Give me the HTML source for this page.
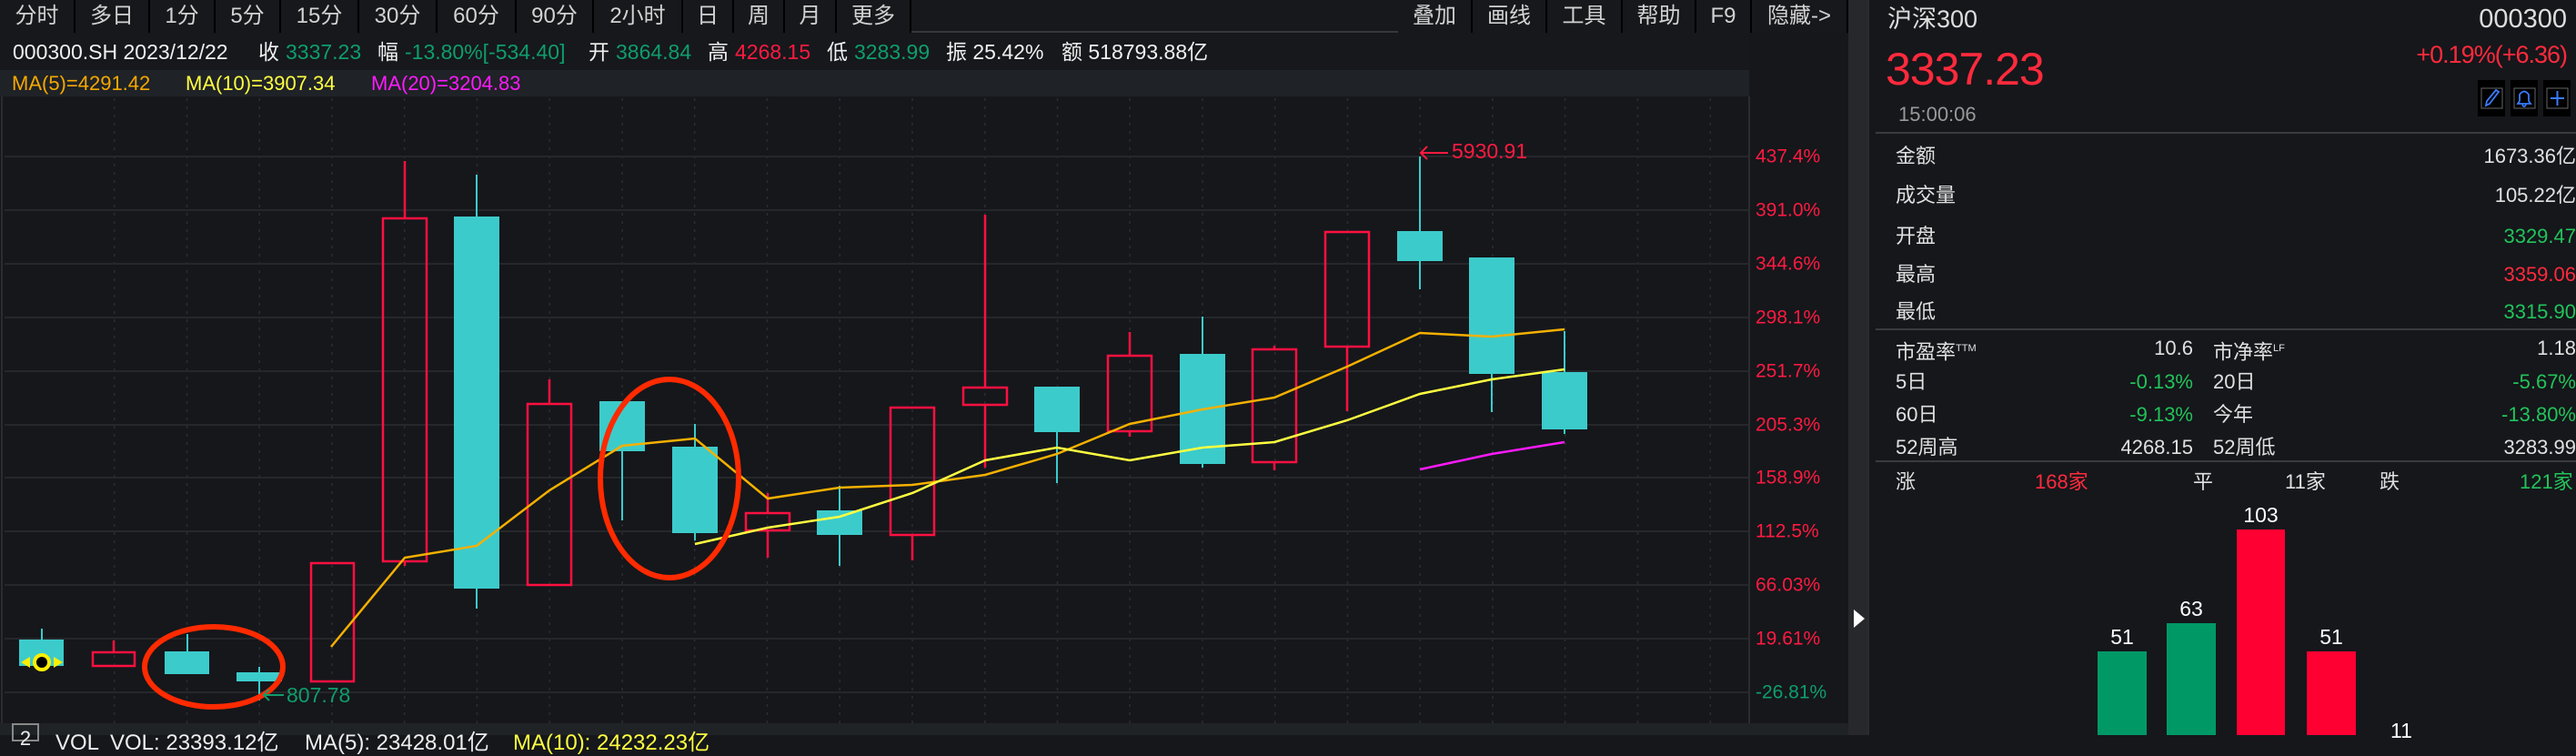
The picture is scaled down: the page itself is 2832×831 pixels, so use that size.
<!DOCTYPE html>
<html><head><meta charset="utf-8"><style>
*{margin:0;padding:0;box-sizing:border-box}
body{width:2832px;height:808px;background:#15171b;overflow:hidden;position:relative;font-family:"Liberation Sans","Noto Sans CJK SC",sans-serif;color:#e0e0e0}
.a{position:absolute;white-space:nowrap}
.tb{position:absolute;top:0;height:36px;background:#17181c;border-right:2px solid #000;color:#d2d2d2;font-size:24px;line-height:36px;text-align:center}
.r{color:#ff1a40}.g{color:#0f9d6b}.w{color:#f0f0f0}
.rp{font-size:22px;line-height:26px}
.gr{color:#22c35a}.rr{color:#ff2a3c}
</style></head><body>
<div class="a" style="left:0;top:0;width:2032px;height:36px;background:#17181c;border-bottom:2px solid #35373b"></div>
<div class="tb" style="left:0;width:83px">分时</div>
<div class="tb" style="left:83px;width:82px">多日</div>
<div class="tb" style="left:165px;width:72px">1分</div>
<div class="tb" style="left:237px;width:72px">5分</div>
<div class="tb" style="left:309px;width:86px">15分</div>
<div class="tb" style="left:395px;width:86px">30分</div>
<div class="tb" style="left:481px;width:87px">60分</div>
<div class="tb" style="left:568px;width:85px">90分</div>
<div class="tb" style="left:653px;width:98px">2小时</div>
<div class="tb" style="left:751px;width:56px">日</div>
<div class="tb" style="left:807px;width:56px">周</div>
<div class="tb" style="left:863px;width:57px">月</div>
<div class="tb" style="left:920px;width:82px">更多</div>
<div class="tb" style="left:1537px;width:82px">叠加</div>
<div class="tb" style="left:1619px;width:82px">画线</div>
<div class="tb" style="left:1701px;width:83px">工具</div>
<div class="tb" style="left:1784px;width:81px">帮助</div>
<div class="tb" style="left:1865px;width:61px">F9</div>
<div class="tb" style="left:1926px;width:106px">隐藏-&gt;</div>
<div class="a" style="left:0;top:37px;width:1923px;height:40px;background:#16181c"></div>
<div class="a" style="left:0;top:77px;width:1923px;height:29px;background:#1f2226"></div>
<div style="font-size:23px;line-height:40px">
<span class="a w" style="left:14px;top:37px">000300.SH 2023/12/22</span>
<span class="a w" style="left:284px;top:37px">收</span><span class="a g" style="left:314px;top:37px">3337.23</span>
<span class="a w" style="left:415px;top:37px">幅</span><span class="a g" style="left:445px;top:37px">-13.80%[-534.40]</span>
<span class="a w" style="left:647px;top:37px">开</span><span class="a g" style="left:677px;top:37px">3864.84</span>
<span class="a w" style="left:778px;top:37px">高</span><span class="a r" style="left:808px;top:37px">4268.15</span>
<span class="a w" style="left:909px;top:37px">低</span><span class="a g" style="left:939px;top:37px">3283.99</span>
<span class="a w" style="left:1040px;top:37px">振 25.42%</span>
<span class="a w" style="left:1167px;top:37px">额 518793.88亿</span>
</div>
<div style="font-size:22px;line-height:29px">
<span class="a" style="left:13px;top:77px;color:#f5a800">MA(5)=4291.42</span>
<span class="a" style="left:204px;top:77px;color:#ffff40">MA(10)=3907.34</span>
<span class="a" style="left:408px;top:77px;color:#ff1aff">MA(20)=3204.83</span>
</div>
<div class="a" style="left:2032px;top:0;width:21px;height:808px;background:#26282c"></div>
<svg class="a" style="left:2032px;top:660px" width="21" height="40"><polygon points="6,10 18,20 6,30" fill="#fff"/></svg>
<svg class="a" style="left:0;top:0" width="2032" height="808">
<line x1="2" y1="106" x2="2" y2="795" stroke="#2a2c30" stroke-width="2"/>
<line x1="1923" y1="106" x2="1923" y2="795" stroke="#2a2c30" stroke-width="2"/>
<g stroke="#2a2d31" stroke-width="1.5" stroke-dasharray="3 6">
<line x1="125.7" y1="108" x2="125.7" y2="795"/><line x1="205.5" y1="108" x2="205.5" y2="795"/><line x1="285.2" y1="108" x2="285.2" y2="795"/><line x1="365" y1="108" x2="365" y2="795"/><line x1="444.7" y1="108" x2="444.7" y2="795"/><line x1="524.5" y1="108" x2="524.5" y2="795"/><line x1="604.2" y1="108" x2="604.2" y2="795"/><line x1="684" y1="108" x2="684" y2="795"/><line x1="763.7" y1="108" x2="763.7" y2="795"/><line x1="843.5" y1="108" x2="843.5" y2="795"/><line x1="923.2" y1="108" x2="923.2" y2="795"/><line x1="1003" y1="108" x2="1003" y2="795"/><line x1="1082.7" y1="108" x2="1082.7" y2="795"/><line x1="1162.5" y1="108" x2="1162.5" y2="795"/><line x1="1242.2" y1="108" x2="1242.2" y2="795"/><line x1="1322" y1="108" x2="1322" y2="795"/><line x1="1401.7" y1="108" x2="1401.7" y2="795"/><line x1="1481.5" y1="108" x2="1481.5" y2="795"/><line x1="1561.2" y1="108" x2="1561.2" y2="795"/><line x1="1641" y1="108" x2="1641" y2="795"/><line x1="1720.7" y1="108" x2="1720.7" y2="795"/><line x1="1800.5" y1="108" x2="1800.5" y2="795"/><line x1="1880.2" y1="108" x2="1880.2" y2="795"/>
</g>
<g stroke="#25272b" stroke-width="2">
<line x1="5" y1="172" x2="1922" y2="172"/><line x1="5" y1="231" x2="1922" y2="231"/><line x1="5" y1="290" x2="1922" y2="290"/><line x1="5" y1="349" x2="1922" y2="349"/><line x1="5" y1="408" x2="1922" y2="408"/><line x1="5" y1="467" x2="1922" y2="467"/><line x1="5" y1="525" x2="1922" y2="525"/><line x1="5" y1="584" x2="1922" y2="584"/><line x1="5" y1="643" x2="1922" y2="643"/><line x1="5" y1="702" x2="1922" y2="702"/><line x1="5" y1="761" x2="1922" y2="761"/>
</g>
<g font-size="21" font-family="Liberation Sans,sans-serif" fill="#ff1a40" dominant-baseline="central">
<text x="1930" y="172">437.4%</text><text x="1930" y="231">391.0%</text><text x="1930" y="290">344.6%</text><text x="1930" y="349">298.1%</text><text x="1930" y="408">251.7%</text><text x="1930" y="467">205.3%</text><text x="1930" y="525">158.9%</text><text x="1930" y="584">112.5%</text><text x="1930" y="643">66.03%</text><text x="1930" y="702">19.61%</text><text x="1930" y="761" fill="#0f9d6b">-26.81%</text>
</g>
<g stroke="#3ccbcb" stroke-width="2" fill="#3ccbcb">
<line x1="46" y1="691" x2="46" y2="703"/><rect x="21" y="703" width="49" height="29" stroke="none"/>
<line x1="206" y1="697" x2="206" y2="716"/><rect x="181" y="716" width="49" height="25" stroke="none"/>
<line x1="285" y1="733" x2="285" y2="770"/><rect x="260" y="739" width="50" height="10" stroke="none"/>
<line x1="524" y1="192" x2="524" y2="669"/><rect x="499" y="238" width="50" height="409" stroke="none"/>
<line x1="684" y1="496" x2="684" y2="572"/><rect x="659" y="441" width="50" height="55" stroke="none"/>
<line x1="764" y1="466" x2="764" y2="594"/><rect x="739" y="491" width="50" height="95" stroke="none"/>
<line x1="923" y1="534" x2="923" y2="622"/><rect x="898" y="561" width="50" height="27" stroke="none"/>
<line x1="1162" y1="475" x2="1162" y2="531"/><rect x="1137" y="425" width="50" height="50" stroke="none"/>
<line x1="1322" y1="348" x2="1322" y2="514"/><rect x="1297" y="389" width="50" height="121" stroke="none"/>
<line x1="1561" y1="172" x2="1561" y2="318"/><rect x="1536" y="254" width="50" height="33" stroke="none"/>
<line x1="1640" y1="411" x2="1640" y2="453"/><rect x="1615" y="283" width="50" height="128" stroke="none"/>
<line x1="1720" y1="364" x2="1720" y2="477"/><rect x="1695" y="409" width="50" height="63" stroke="none"/>
</g>
<g stroke="#ff1040" stroke-width="2.5" fill="none">
<line x1="125" y1="704" x2="125" y2="717"/><rect x="102" y="717" width="46" height="15"/>
<rect x="342" y="619" width="47" height="130"/>
<line x1="445" y1="177" x2="445" y2="240"/><line x1="445" y1="617" x2="445" y2="622"/><rect x="421" y="240" width="48" height="377"/>
<line x1="604" y1="417" x2="604" y2="444"/><rect x="580" y="444" width="48" height="199"/>
<line x1="844" y1="542" x2="844" y2="564"/><line x1="844" y1="583" x2="844" y2="613"/><rect x="820" y="564" width="48" height="19"/>
<line x1="1003" y1="588" x2="1003" y2="616"/><rect x="979" y="448" width="48" height="140"/>
<line x1="1083" y1="236" x2="1083" y2="426"/><line x1="1083" y1="445" x2="1083" y2="514"/><rect x="1059" y="426" width="48" height="19"/>
<line x1="1242" y1="365" x2="1242" y2="391"/><line x1="1242" y1="474" x2="1242" y2="480"/><rect x="1218" y="391" width="48" height="83"/>
<line x1="1401" y1="380" x2="1401" y2="384"/><line x1="1401" y1="508" x2="1401" y2="517"/><rect x="1377" y="384" width="48" height="124"/>
<line x1="1481" y1="381" x2="1481" y2="452"/><rect x="1457" y="255" width="48" height="126"/>
</g>
<polyline fill="none" stroke="#f5b000" stroke-width="2.5" points="364,711 445,613 524,600 604,539 684,490 764,482 844,548 923,536 1003,533 1083,522 1162,499 1242,466 1322,450 1401,437 1481,403 1561,366 1640,370 1720,362"/>
<polyline fill="none" stroke="#ffff40" stroke-width="2.5" points="764,598 844,580 923,568 1003,542 1083,506 1162,492 1242,506 1322,492 1401,486 1481,462 1561,433 1640,417 1720,406"/>
<polyline fill="none" stroke="#ff1aff" stroke-width="2.5" points="1561,516 1640,499 1720,486"/>
<ellipse cx="235" cy="733" rx="76" ry="44" fill="none" stroke="#ff2a00" stroke-width="6"/>
<ellipse cx="736" cy="526" rx="76" ry="109" fill="none" stroke="#ff2a00" stroke-width="6"/>
<g stroke="#0f9d6b" stroke-width="2" fill="none"><line x1="290" y1="764" x2="312" y2="764"/><polyline points="296,758 290,764 296,770"/></g>
<text x="315" y="764" font-size="23" fill="#0f9d6b" dominant-baseline="central" font-family="Liberation Sans,sans-serif">807.78</text>
<g stroke="#ff1a40" stroke-width="2" fill="none"><line x1="1562" y1="168" x2="1592" y2="168"/><polyline points="1569,161 1562,168 1569,175"/></g>
<text x="1596" y="166" font-size="23" fill="#ff1a40" dominant-baseline="central" font-family="Liberation Sans,sans-serif">5930.91</text>
<circle cx="46" cy="728" r="8" fill="#000" stroke="#ffee00" stroke-width="4"/>
<polygon points="23,728 33,722 33,734" fill="#ffee00"/><polygon points="69,728 59,722 59,734" fill="#ffee00"/>
</svg>
<div class="a" style="left:0;top:795px;width:2032px;height:13px;background:#202326"></div>
<div class="a" style="left:13px;top:795px;width:30px;height:20px;border:2px solid #888;color:#eee;font-size:22px;line-height:30px;text-align:center">2</div>
<div class="a" style="top:803px;font-size:24px;line-height:28px;color:#eee;left:61px">VOL</div>
<div class="a" style="top:803px;font-size:24px;line-height:28px;color:#eee;left:121px">VOL: 23393.12亿</div>
<div class="a" style="top:803px;font-size:24px;line-height:28px;color:#eee;left:335px">MA(5): 23428.01亿</div>
<div class="a" style="top:803px;font-size:24px;line-height:28px;color:#ffff40;left:564px">MA(10): 24232.23亿</div>
<div class="a" style="left:2053px;top:0;width:779px;height:808px;background:#15171b;border-left:2px solid #2a2c30"></div>
<div class="a w" style="left:2075px;top:5px;font-size:27px;line-height:32px;color:#ddd">沪深300</div>
<div class="a" style="right:10px;top:5px;font-size:29px;line-height:32px;color:#ddd">000300</div>
<div class="a rr" style="left:2073px;top:48px;font-size:50px;line-height:56px;letter-spacing:-1px">3337.23</div>
<div class="a rr" style="right:10px;top:45px;font-size:27px;line-height:30px;letter-spacing:-1px">+0.19%(+6.36)</div>
<div class="a" style="left:2087px;top:113px;font-size:22px;line-height:26px;color:#999">15:00:06</div>
<svg class="a" style="left:2724px;top:88px" width="104" height="40">
<rect x="0" y="0" width="30" height="40" fill="#000"/><rect x="36" y="0" width="30" height="40" fill="#000"/><rect x="72" y="0" width="30" height="40" fill="#000"/>
<rect x="4" y="9" width="23" height="22" fill="none" stroke="#666" stroke-width="1"/><rect x="40" y="9" width="23" height="22" fill="none" stroke="#666"/><rect x="76" y="9" width="23" height="22" fill="none" stroke="#666"/>
<path d="M9,28 L10,23 L20,11 L23,13 L13,26 Z" fill="none" stroke="#3a7bff" stroke-width="1.8"/>
<path d="M44,26 L58,26 L56,23 L56,16 Q51,9 46,16 L46,23 Z M49,27 Q51,31 53,27" fill="none" stroke="#3a7bff" stroke-width="1.8"/>
<path d="M87.5,12 V28 M80,20 H95" stroke="#3a7bff" stroke-width="2"/>
</svg>
<div class="a" style="left:2062px;top:145px;width:770px;height:2px;background:#3a3b3f"></div>
<div class="rp">
<span class="a" style="left:2084px;top:159px">金额</span><span class="a" style="right:0;top:159px">1673.36亿</span>
<span class="a" style="left:2084px;top:202px">成交量</span><span class="a" style="right:0;top:202px">105.22亿</span>
<span class="a" style="left:2084px;top:247px">开盘</span><span class="a gr" style="right:0;top:247px">3329.47</span>
<span class="a" style="left:2084px;top:289px">最高</span><span class="a rr" style="right:0;top:289px">3359.06</span>
<span class="a" style="left:2084px;top:330px">最低</span><span class="a gr" style="right:0;top:330px">3315.90</span>
</div>
<div class="a" style="left:2062px;top:361px;width:770px;height:2px;background:#3a3b3f"></div>
<div class="rp">
<span class="a" style="left:2084px;top:370px">市盈率<sup style="font-size:11px">TTM</sup></span><span class="a" style="right:421px;top:370px">10.6</span>
<span class="a" style="left:2433px;top:370px">市净率<sup style="font-size:11px">LF</sup></span><span class="a" style="right:0;top:370px">1.18</span>
<span class="a" style="left:2084px;top:407px">5日</span><span class="a gr" style="right:421px;top:407px">-0.13%</span>
<span class="a" style="left:2433px;top:407px">20日</span><span class="a gr" style="right:0;top:407px">-5.67%</span>
<span class="a" style="left:2084px;top:443px">60日</span><span class="a gr" style="right:421px;top:443px">-9.13%</span>
<span class="a" style="left:2433px;top:443px">今年</span><span class="a gr" style="right:0;top:443px">-13.80%</span>
<span class="a" style="left:2084px;top:479px">52周高</span><span class="a" style="right:421px;top:479px">4268.15</span>
<span class="a" style="left:2433px;top:479px">52周低</span><span class="a" style="right:0;top:479px">3283.99</span>
</div>
<div class="a" style="left:2062px;top:506px;width:770px;height:2px;background:#3a3b3f"></div>
<div class="rp">
<span class="a" style="left:2084px;top:517px">涨</span><span class="a rr" style="left:2237px;top:517px">168家</span>
<span class="a" style="left:2411px;top:517px">平</span><span class="a" style="left:2512px;top:517px">11家</span>
<span class="a" style="left:2616px;top:517px">跌</span><span class="a gr" style="left:2770px;top:517px">121家</span>
</div>
<div class="a" style="left:2306px;top:716px;width:54px;height:92px;background:#009966"></div>
<div class="a" style="left:2382px;top:685px;width:54px;height:123px;background:#009966"></div>
<div class="a" style="left:2459px;top:582px;width:53px;height:226px;background:#ff0033"></div>
<div class="a" style="left:2536px;top:716px;width:54px;height:92px;background:#ff0033"></div>
<div style="font-size:23px;line-height:26px;color:#fff">
<span class="a" style="left:2306px;width:54px;text-align:center;top:687px">51</span>
<span class="a" style="left:2382px;width:54px;text-align:center;top:656px">63</span>
<span class="a" style="left:2459px;width:53px;text-align:center;top:553px">103</span>
<span class="a" style="left:2536px;width:54px;text-align:center;top:687px">51</span>
<span class="a" style="left:2613px;width:54px;text-align:center;top:790px">11</span>
</div>
</body></html>
